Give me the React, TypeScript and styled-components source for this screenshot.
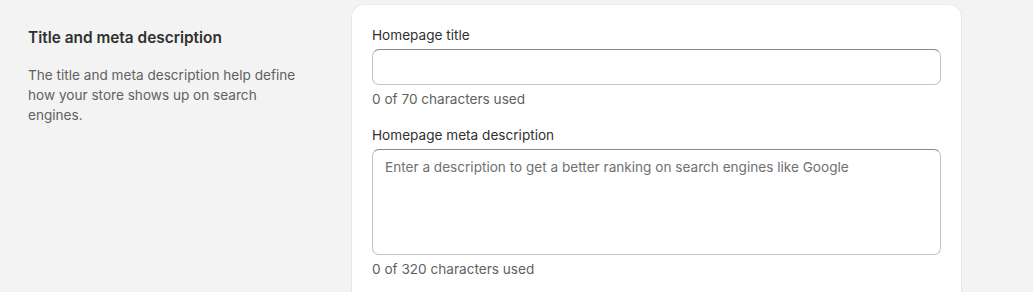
import React from 'react';
import styled, { createGlobalStyle } from 'styled-components';

const GlobalStyle = createGlobalStyle`
    html, body {
        margin: 0;
        padding: 0;
        background: #f3f3f3;
    }
    body {
        font-family: Inter, "Noto Sans", "Liberation Sans", sans-serif;
        color: #303030;
        -webkit-font-smoothing: antialiased;
    }
`;

const Page = styled.div`
    display: grid;
    grid-template-columns: 352px 609px;
    padding-top: 5px;
    min-height: 292px;
    box-sizing: border-box;
`;

const Annotation = styled.div`
    padding: 23px 50px 0 28px;
`;

const SectionTitle = styled.h2`
    margin: 0;
    font-size: 15.4px;
    line-height: 20px;
    font-weight: 600;
    color: #303030;
`;

const SectionText = styled.p`
    margin: 17px 0 0;
    font-size: 13.6px;
    line-height: 20px;
    color: #616161;
`;

const Card = styled.div`
    background: #ffffff;
    border-radius: 12px 12px 0 0;
    box-shadow: 0 0 0 1px rgba(0, 0, 0, 0.03), 0 1px 2px rgba(0, 0, 0, 0.08);
    padding: 20px 20px 14px;
    display: flex;
    flex-direction: column;
    gap: 16px;
`;

const Field = styled.div`
    display: flex;
    flex-direction: column;
`;

const Label = styled.label`
    font-size: 13.6px;
    line-height: 20px;
    color: #303030;
    margin-bottom: 4px;
`;

const inputBase = `
    box-sizing: border-box;
    width: 100%;
    border: 1px solid #c4c4c4;
    border-top-color: #8a8a8a;
    border-radius: 7px;
    background: #ffffff;
    font-family: inherit;
    font-size: 13.6px;
    color: #303030;
    outline: none;
    &::placeholder {
        color: #707070;
    }
`;

const TextInput = styled.input`
    ${inputBase}
    height: 36px;
    padding: 0 12px;
`;

const TextArea = styled.textarea<{ $height: number }>`
    ${inputBase}
    height: ${p => p.$height}px;
    padding: 7px 12px;
    line-height: 20px;
    resize: none;
`;

const Help = styled.div`
    margin-top: 4px;
    font-size: 13.6px;
    line-height: 20px;
    color: #616161;
`;

export default function App() {
    return (
        <>
            <GlobalStyle />
            <Page>
                <Annotation>
                    <SectionTitle>Title and meta description</SectionTitle>
                    <SectionText>
                        The title and meta description help define how your store shows up on search engines.
                    </SectionText>
                </Annotation>
                <Card>
                    <Field>
                        <Label>Homepage title</Label>
                        <TextInput type="text" />
                        <Help>0 of 70 characters used</Help>
                    </Field>
                    <Field>
                        <Label>Homepage meta description</Label>
                        <TextArea
                            $height={106}
                            placeholder="Enter a description to get a better ranking on search engines like Google"
                        />
                        <Help>0 of 320 characters used</Help>
                    </Field>
                </Card>
            </Page>
        </>
    );
}
